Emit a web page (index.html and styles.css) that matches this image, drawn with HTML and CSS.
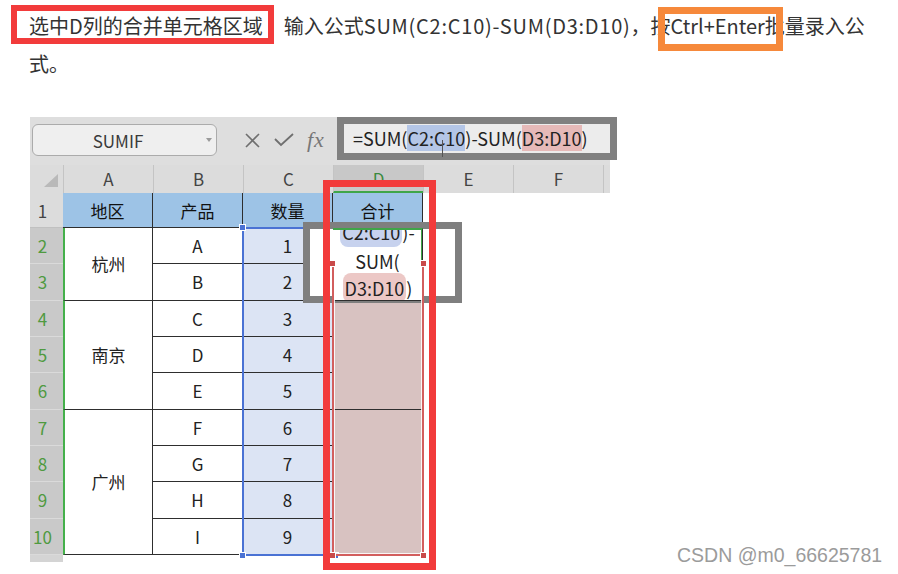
FILE: index.html
```html
<!DOCTYPE html>
<html lang="zh-CN">
<head>
    <meta charset="UTF-8">
    <title>合并单元格求和</title>
    <link rel="stylesheet" href="styles.css">
</head>
<body>
    <p class="intro"><span class="mark-red">选中D列的合并单元格区域</span>输入公式<span class="expr">SUM(C2:C10)-SUM(D3:D10)</span>，按<span class="mark-orange">Ctrl+Enter</span>批量录入公式。</p>

    <div class="sheet">
        <div class="toolbar">
            <div class="namebox">SUMIF<i class="caret"></i></div>
            <div class="tools">
                <svg width="15" height="15" viewBox="0 0 15 15"><path d="M1 1 L14 14 M14 1 L1 14" stroke="#6f6f6f" stroke-width="1.6" fill="none"/></svg>
                <svg width="20" height="14" viewBox="0 0 20 14"><path d="M1 6 L7 12 L19 1" stroke="#6f6f6f" stroke-width="1.8" fill="none"/></svg>
                <span class="fx">fx</span>
            </div>
            <div class="formula">=SUM(<span class="ref-c">C2:C10</span>)-SUM(<span class="ref-d">D3:D10</span>)</div>
        </div>

        <div class="colheads">
            <div class="corner"><i class="tri"></i></div>
            <div class="colhead">A</div>
            <div class="colhead">B</div>
            <div class="colhead">C</div>
            <div class="colhead sel">D</div>
            <div class="colhead">E</div>
            <div class="colhead">F</div>
            <div class="colrest"></div>
        </div>

        <div class="body">
            <div class="rowheads">
                <div class="rh first">1</div>
                <div class="rh sel">2</div>
                <div class="rh sel">3</div>
                <div class="rh sel">4</div>
                <div class="rh sel">5</div>
                <div class="rh sel">6</div>
                <div class="rh sel">7</div>
                <div class="rh sel">8</div>
                <div class="rh sel">9</div>
                <div class="rh sel">10</div>
                <div class="rh stub"></div>
            </div>
            <div class="cells">
                <div class="cell head">地区</div>
                <div class="cell head">产品</div>
                <div class="cell head">数量</div>
                <div class="cell head">合计</div>

                <div class="cell city span2">杭州</div>
                <div class="cell">A</div>
                <div class="cell qty">1</div>
                <div class="cell edit span2">
                    <div class="edit-text">
                        <div class="first-line"><span class="ref-c round">C2:C10</span>)-</div>
                        <div>SUM(</div>
                        <div><span class="ref-d round">D3:D10</span>)</div>
                    </div>
                </div>
                <div class="cell">B</div>
                <div class="cell qty">2</div>

                <div class="cell city span3">南京</div>
                <div class="cell">C</div>
                <div class="cell qty">3</div>
                <div class="cell total span3"></div>
                <div class="cell">D</div>
                <div class="cell qty">4</div>
                <div class="cell">E</div>
                <div class="cell qty">5</div>

                <div class="cell city span4">广州</div>
                <div class="cell">F</div>
                <div class="cell qty">6</div>
                <div class="cell total span4"></div>
                <div class="cell">G</div>
                <div class="cell qty">7</div>
                <div class="cell">H</div>
                <div class="cell qty">8</div>
                <div class="cell">I</div>
                <div class="cell qty">9</div>
            </div>
        </div>

        <!-- 选区和标注框 -->
        <div class="range-c">
            <i class="handle tl"></i><i class="handle bl"></i><i class="handle br"></i>
        </div>
        <div class="range-d">
            <i class="handle tl"></i><i class="handle tr"></i><i class="handle bl"></i><i class="handle br"></i>
        </div>
        <div class="note-gray"></div>
        <div class="note-red"></div>
        <i class="ibeam"></i>
    </div>

    <div class="watermark">CSDN @m0_66625781</div>
</body>
</html>
```

FILE: styles.css
```css
* {
    box-sizing: border-box;
    margin: 0;
    padding: 0;
}

body {
    position: relative;
    width: 898px;
    height: 574px;
    overflow: hidden;
    background-color: #fff;
    color: #333;
    font-family: "Noto Sans CJK SC", "Noto Sans", sans-serif;
}

.intro {
    width: 872px;
    padding: 7px 0 0 29px;
    font-size: 20px;
    line-height: 38px;
    color: #333;
}

.mark-red {
    display: inline-block;
    vertical-align: top;
    margin: -2px 10px 0 -18px;
    padding: 2px 5px 0 12px;
    border: 6px solid #f23b3b;
    line-height: 25px;
}

.expr {
    letter-spacing: 0.75px;
}

.mark-orange {
    position: relative;
}

.mark-orange::after {
    content: "";
    position: absolute;
    left: -13px;
    right: -18px;
    top: -4px;
    bottom: -11px;
    border: 7px solid #f6893b;
}

/* 表格截图 */
.sheet {
    position: relative;
    width: 580px;
    height: 445px;
    margin: 34px 0 0 30px;
    background-color: #fff;
}

.toolbar {
    display: flex;
    height: 48px;
    background-color: #dedede;
}

.namebox {
    position: relative;
    flex: none;
    display: flex;
    align-items: center;
    justify-content: center;
    width: 185px;
    height: 32px;
    margin: 7px 0 0 2px;
    padding-right: 13px;
    border: 1px solid #ababab;
    border-radius: 6px;
    background-color: #efefef;
    font-size: 17px;
    color: #3a3a3a;
}

.caret {
    position: absolute;
    right: 4px;
    top: 13px;
    border-left: 3px solid transparent;
    border-right: 3px solid transparent;
    border-top: 4px solid #9a9a9a;
}

.tools {
    flex: none;
    display: flex;
    align-items: center;
    width: 120px;
    height: 46px;
    padding-left: 28px;
    gap: 14px;
}

.fx {
    margin-left: -1px;
    font-family: "Liberation Serif", serif;
    font-style: italic;
    font-size: 22px;
    color: #777;
    letter-spacing: 1px;
}

.formula {
    flex: none;
    width: 280px;
    height: 43px;
    padding-left: 9px;
    border: 7px solid #808080;
    background-color: #ececec;
    font-size: 18px;
    line-height: 29px;
    color: #222;
    white-space: nowrap;
}

.ref-c { background-color: #b4c6e7; }
.ref-d { background-color: #e6b9b8; }

.colheads {
    display: flex;
    height: 28px;
    background-color: #dcdcdc;
}

.corner {
    position: relative;
    width: 33px;
}

.tri {
    position: absolute;
    right: 5px;
    bottom: 6px;
    border-left: 14px solid transparent;
    border-bottom: 13px solid #b9b9b9;
}

.colhead {
    width: 90px;
    padding-top: 2px;
    border-left: 1px solid #c4c4c4;
    text-align: center;
    font-size: 17px;
    line-height: 24px;
    color: #444;
}

.colhead.sel {
    background-color: #c8c8c8;
    color: #3b8a3e;
    border-bottom: 2px solid #3fa649;
}

.colrest {
    flex: 1;
    border-left: 1px solid #c4c4c4;
}

.body {
    display: flex;
    height: 369px;
}

.rowheads {
    width: 33px;
}

.rh {
    height: 36.33px;
    padding-right: 8px;
    text-align: center;
    font-size: 17px;
    line-height: 36px;
    background-color: #c9c9c9;
    border-bottom: 1px solid #dadada;
    color: #4f9a40;
}

.rh.first {
    height: 35px;
    line-height: 35px;
    background-color: #dcdcdc;
    border-bottom-color: #c0c0c0;
    color: #444;
}

.rh.stub {
    height: 7px;
    border: none;
    background-color: #d4d4d4;
}

.cells {
    display: grid;
    grid-template-columns: repeat(4, 90px);
    grid-template-rows: 35px repeat(9, 36.33px);
    width: 360px;
    height: 362px;
}

.cell {
    display: flex;
    align-items: center;
    justify-content: center;
    border-right: 1px solid #2e2e2e;
    border-bottom: 1px solid #2e2e2e;
    font-size: 17px;
    color: #222;
    background-color: #fff;
}

.span2 { grid-row: span 2; }
.span3 { grid-row: span 3; }
.span4 { grid-row: span 4; }

.cell.head { background-color: #9dc3e6; color: #111; }
.cell.city { border-left: 2px solid #45b04b; }
.cell.qty { background-color: #dce4f4; }
.cell.total { background-color: #d8c2c1; }

.cell.edit {
    position: relative;
    z-index: 2;
    display: block;
    overflow: hidden;
    border-top: 2px solid #3fa649;
    font-size: 18px;
}

.cell.edit::after {
    content: "";
    position: absolute;
    right: -1px;
    top: 0;
    width: 2px;
    height: 32px;
    background-color: #3fa649;
}

.edit-text {
    margin-top: -11px;
    line-height: 27px;
    text-align: center;
}

.edit-text .first-line {
    margin-bottom: 2px;
}

.round {
    padding: 2px 2px;
    border-radius: 8px;
}

.edit-text .ref-c { background-color: #c7d2ee; }
.edit-text .ref-d { background-color: #ecc8c6; }

.range-c {
    position: absolute;
    left: 212px;
    top: 110px;
    width: 92px;
    height: 329px;
    border: 2px solid #4a72d4;
    border-right: none;
}

.range-d {
    position: absolute;
    z-index: 2;
    left: 302px;
    top: 146px;
    width: 92px;
    height: 293px;
    border: 2px solid #d25e5e;
    border-top: none;
    box-shadow: inset 1px 0 0 rgba(255, 255, 255, 0.85), inset -1px -1px 0 rgba(255, 255, 255, 0.85);
}

.handle {
    position: absolute;
    width: 7px;
    height: 7px;
    background-color: #4a72d4;
    border: 1px solid #fff;
}

.range-d .handle { background-color: #c94a4a; }

.handle.tl { left: -5px; top: -5px; }
.handle.tr { right: -5px; top: -5px; }
.handle.bl { left: -5px; bottom: -5px; }
.handle.br { right: -5px; bottom: -5px; }

.range-d .handle.tl,
.range-d .handle.tr { top: -3px; }

.note-gray {
    position: absolute;
    z-index: 1;
    left: 273px;
    top: 105px;
    width: 159px;
    height: 81px;
    border: 7px solid #7f7f7f;
    background-color: #fff;
}

.note-red {
    position: absolute;
    z-index: 3;
    left: 293px;
    top: 63px;
    width: 113px;
    height: 390px;
    border: 7px solid #f23b3b;
}

.ibeam {
    position: absolute;
    left: 412px;
    top: 23px;
    width: 1px;
    height: 17px;
    background-color: #555;
}

.watermark {
    position: absolute;
    left: 677px;
    top: 546px;
    font-family: "Liberation Sans", Arial, sans-serif;
    font-size: 19.5px;
    line-height: 19px;
    color: #9b9b9b;
    text-shadow: 0 0 1px #fff, 0 0 2px #fff;
}
```
